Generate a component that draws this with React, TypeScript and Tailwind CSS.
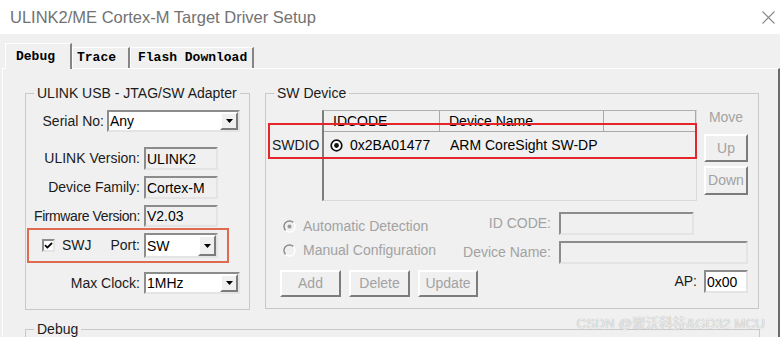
import React from 'react';

const sunken = "border-2 border-t-[#8c8c8c] border-l-[#8c8c8c] border-r-[#e4e4e4] border-b-[#e4e4e4]";
const raised = "border-2 border-t-white border-l-white border-r-[#7c7c7c] border-b-[#7c7c7c]";

function TextBox({ value = '', className = '', white = false }: { value?: string; className?: string; white?: boolean }) {
  return (
    <div className={`${sunken} ${white ? 'bg-white' : 'bg-[#f0f0f0]'} flex items-center pl-[1px] text-black leading-none ${className}`}>
      {value}
    </div>
  );
}

function Combo({ value, className = '' }: { value: string; className?: string }) {
  return (
    <div className={`${sunken} bg-white flex items-stretch text-black ${className}`}>
      <div className="flex-1 flex items-center pl-[1px] leading-none">{value}</div>
      <div className={`${raised} w-[18px] bg-[#f0f0f0] flex items-center justify-center`}>
        <svg width="7" height="4" viewBox="0 0 7 4"><path d="M0 0h7L3.5 4z" fill="#000" /></svg>
      </div>
    </div>
  );
}

function Btn({ label, className = '' }: { label: string; className?: string }) {
  return (
    <div className={`${raised} bg-[#f0f0f0] flex items-center justify-center text-[#a2a2a2] ${className}`}>
      {label}
    </div>
  );
}

function DisabledRadio({ checked }: { checked?: boolean }) {
  return (
    <svg width="13" height="13" viewBox="0 0 13 13">
      <circle cx="6.5" cy="6.5" r="5.5" fill="#f0f0f0" />
      <path d="M2.6 10.4A5.5 5.5 0 0 1 10.4 2.6" stroke="#8a8a8a" strokeWidth="1.4" fill="none" />
      <path d="M10.4 2.6A5.5 5.5 0 0 1 2.6 10.4" stroke="#ffffff" strokeWidth="1.4" fill="none" />
      {checked && <circle cx="6.5" cy="6.5" r="2" fill="#9a9a9a" />}
    </svg>
  );
}

export default function App() {
  return (
    <div className="w-[780px] h-[337px] overflow-hidden bg-[#f0f0f0] relative font-['Liberation_Sans',Arial,sans-serif] text-[14px] text-[#1b1b1b]">
      {/* title bar */}
      <div className="h-[34px] bg-white flex items-center justify-between pl-[10px] pr-[5px]">
        <span className="text-[16.5px] text-[#727272]">ULINK2/ME Cortex-M Target Driver Setup</span>
        <svg width="13" height="13" viewBox="0 0 13 13">
          <path d="M0.5 0.5L12.5 12.5M12.5 0.5L0.5 12.5" stroke="#8a8a8a" strokeWidth="1.1" />
        </svg>
      </div>

      {/* tabs */}
      <div className="h-[34px] flex items-end pl-[5px] font-['Liberation_Mono','Courier_New',monospace] text-[13px] font-bold text-black">
        <div className="relative z-10 -mb-px h-[26px] w-[67px] bg-[#f0f0f0] border-t border-l border-white border-r-2 border-r-[#858585] flex items-center pl-[10px]">
          Debug
        </div>
        <div className="h-[21px] w-[58px] border-t border-l border-white border-r-2 border-r-[#858585] flex items-center pl-[4px]">
          Trace
        </div>
        <div className="h-[21px] w-[124px] border-t border-l border-white border-r-2 border-r-[#858585] flex items-center pl-[7px]">
          Flash Download
        </div>
      </div>

      {/* tab page */}
      <div className="ml-[2px] w-[778px] h-[270px] border-t border-l border-white border-r-2 border-r-[#6c6c6c] pl-[22px] pt-[16px]">
        <div className="flex items-start">
          {/* ULINK adapter group */}
          <fieldset className="w-[225px] border border-[#c8c8c8] pb-[15px]">
            <legend className="ml-[8px] px-[3px] leading-[16px]">ULINK USB - JTAG/SW Adapter</legend>
            <div className="flex items-center mt-[9px] h-[22px]">
              <div className="w-[78px] text-right">Serial No:</div>
              <Combo value="Any" className="ml-[3px] w-[133px] h-[22px]" />
            </div>
            <div className="flex items-center mt-[15px]">
              <div className="w-[114px] text-right">ULINK Version:</div>
              <TextBox value="ULINK2" className="ml-[4px] w-[74px] h-[23px]" />
            </div>
            <div className="flex items-center mt-[6px]">
              <div className="w-[114px] text-right">Device Family:</div>
              <TextBox value="Cortex-M" className="ml-[4px] w-[74px] h-[23px]" />
            </div>
            <div className="flex items-center mt-[6px]">
              <div className="w-[114px] text-right tracking-[-0.4px]">Firmware Version:</div>
              <TextBox value="V2.03" className="ml-[4px] w-[74px] h-[22px]" />
            </div>
            <div className="ml-[1px] mt-[1px] w-[202px] h-[35px] border-2 border-[#df6a4f] flex items-center pl-[13px]">
              <div className={`${sunken} w-[13px] h-[13px] bg-white flex items-center justify-center`}>
                <svg width="9" height="9" viewBox="0 0 9 9"><path d="M1 4.2L3.4 6.6L8 2" stroke="#000" strokeWidth="1.8" fill="none" /></svg>
              </div>
              <span className="ml-[7px] w-[45px]">SWJ</span>
              <span className="w-[33px] text-right">Port:</span>
              <Combo value="SW" className="ml-[4px] w-[74px] h-[25px]" />
            </div>
            <div className="flex items-center mt-[9px]">
              <div className="w-[114px] text-right">Max Clock:</div>
              <Combo value="1MHz" className="ml-[4px] w-[96px] h-[22px]" />
            </div>
          </fieldset>

          {/* SW device group */}
          <fieldset className="ml-[15px] w-[494px] border border-[#c8c8c8] pb-[11px]">
            <legend className="ml-[8px] px-[3px] leading-[16px]">SW Device</legend>
            <div className="relative flex items-start mt-[9px]">
              <div className="w-[56px] pt-[22px]">
                <div className="h-[26px] flex items-center pl-[6px]">SWDIO</div>
              </div>
              <div className="w-[375px] h-[91px] border-l-2 border-l-[#7d7d7d] border-t border-t-[#b0b0b0] border-r border-r-[#dadada] border-b border-b-[#dadada]">
                <div className="flex h-[21px] text-black">
                  <div className="w-[116px] border-r border-b border-[#a9a9a9] flex items-center pl-[9px]">IDCODE</div>
                  <div className="w-[164px] border-r border-b border-[#a9a9a9] flex items-center pl-[9px]">Device Name</div>
                  <div className="flex-1 border-r border-b border-[#a9a9a9]" />
                </div>
                <div className="flex h-[26px] items-center text-black">
                  <div className="w-[116px] flex items-center pl-[6px]">
                    <svg width="13" height="13" viewBox="0 0 13 13">
                      <circle cx="6.5" cy="6.5" r="5.3" stroke="#111" strokeWidth="1.7" fill="#fff" />
                      <circle cx="6.5" cy="6.5" r="2.4" fill="#111" />
                    </svg>
                    <span className="ml-[7px]">0x2BA01477</span>
                  </div>
                  <div className="pl-[10px]">ARM CoreSight SW-DP</div>
                </div>
              </div>
              <div className="ml-[7px] w-[44px] flex flex-col">
                <div className="h-[14px] leading-[14px] text-center text-[#a3a3a3]">Move</div>
                <Btn label="Up" className="mt-[10px] h-[28px]" />
                <Btn label="Down" className="mt-[4px] h-[29px]" />
              </div>
              <div className="absolute left-[2px] top-[13px] w-[429px] h-[36px] border-2 border-[#e4262b]" />
            </div>

            <div className="flex items-start mt-[11px]">
              <div className="w-[174px] pl-[17px] pt-[2px] text-[#a2a2a2]">
                <div className="h-[24px] flex items-center gap-[7px]">
                  <DisabledRadio checked />
                  <span>Automatic Detection</span>
                </div>
                <div className="h-[24px] flex items-center gap-[7px]">
                  <DisabledRadio />
                  <span>Manual Configuration</span>
                </div>
              </div>
              <div className="flex flex-col text-[#a2a2a2]">
                <div className="flex items-center">
                  <div className="w-[111px] text-right">ID CODE:</div>
                  <TextBox className="ml-[8px] w-[135px] h-[23px]" />
                </div>
                <div className="flex items-center mt-[6px]">
                  <div className="w-[111px] text-right">Device Name:</div>
                  <TextBox className="ml-[8px] w-[189px] h-[23px]" />
                </div>
              </div>
            </div>

            <div className="flex items-start mt-[6px] pl-[14px] pr-[10px]">
              <Btn label="Add" className="w-[61px] h-[27px]" />
              <Btn label="Delete" className="ml-[8px] w-[61px] h-[27px]" />
              <Btn label="Update" className="ml-[8px] w-[60px] h-[27px]" />
              <div className="flex-1" />
              <div className="flex items-center h-[23px]">
                <span>AP:</span>
                <TextBox value="0x00" white className="ml-[7px] w-[44px] h-[23px]" />
              </div>
            </div>
          </fieldset>
        </div>

        {/* Debug group */}
        <fieldset className="mt-[11px] w-[735px] h-[60px] border border-[#c8c8c8]">
          <legend className="ml-[8px] px-[3px] leading-[16px]">Debug</legend>
        </fieldset>
      </div>

      {/* watermark */}
      <div className="absolute right-[15px] top-[314px] text-[13.5px] text-[#ececec] [text-shadow:0_0_1px_#9a9a9a] font-['Liberation_Sans','Noto_Sans_CJK_SC',sans-serif]">
        CSDN @聚沃科技&amp;GD32 MCU
      </div>
    </div>
  );
}
